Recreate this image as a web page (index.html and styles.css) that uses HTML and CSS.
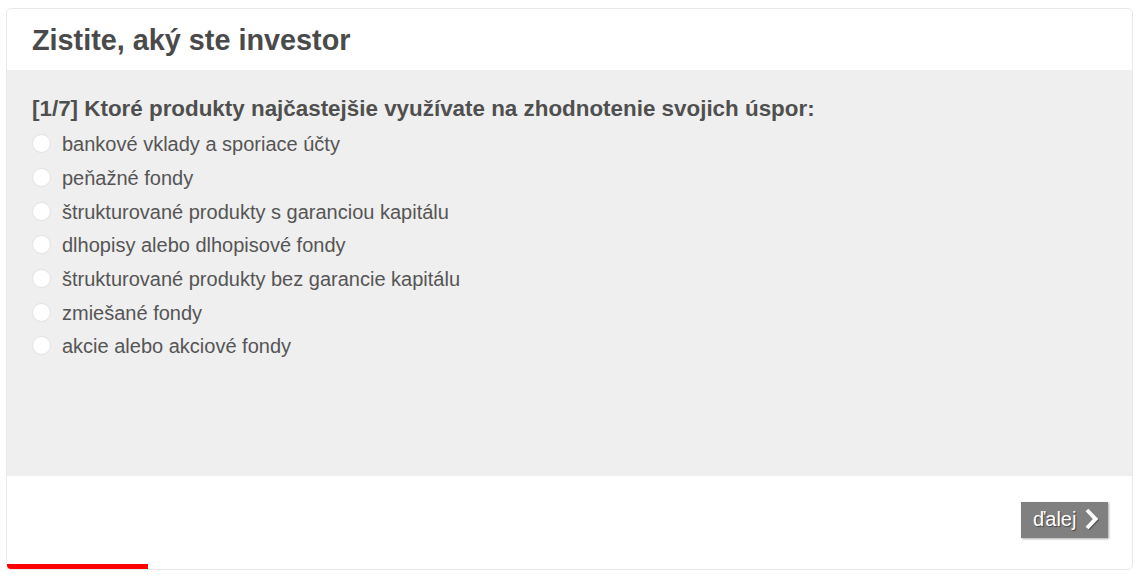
FILE: index.html
```html
<!DOCTYPE html>
<html lang="sk">
<head>
<meta charset="utf-8">
<title>Zistite, aký ste investor</title>
<link rel="stylesheet" href="styles.css">
</head>
<body>
<div class="card">
  <div class="head"><h1 class="title">Zistite, aký ste investor</h1></div>
  <div class="body">
    <p class="question">[1/7] Ktoré produkty najčastejšie využívate na zhodnotenie svojich úspor:</p>
    <ul class="options">
      <li class="option"><span class="radio"></span>bankové vklady a sporiace účty</li>
      <li class="option"><span class="radio"></span>peňažné fondy</li>
      <li class="option"><span class="radio"></span>štrukturované produkty s garanciou kapitálu</li>
      <li class="option"><span class="radio"></span>dlhopisy alebo dlhopisové fondy</li>
      <li class="option"><span class="radio"></span>štrukturované produkty bez garancie kapitálu</li>
      <li class="option"><span class="radio"></span>zmiešané fondy</li>
      <li class="option"><span class="radio"></span>akcie alebo akciové fondy</li>
    </ul>
  </div>
  <div class="foot">
    <div class="actions">
      <button class="next">ďalej<svg class="chev" width="15" height="24" viewBox="0 0 15 24"><path d="M3 3 L11.5 12 L3 21" fill="none" stroke="#fff" stroke-width="4" stroke-linejoin="miter"/></svg></button>
    </div>
    <div class="progress"><div class="bar" style="width:141px"></div></div>
  </div>
</div>
</body>
</html>
```
FILE: styles.css
```css
html, body {
  margin: 0;
  padding: 0;
  background: #fff;
}
body {
  font-family: "Liberation Sans", Arial, sans-serif;
  color: #555;
}
.card {
  margin: 8px 7px 0 6px;
  height: 562px;
  box-sizing: border-box;
  border: 1px solid #e9e9e9;
  border-radius: 5px;
  display: flex;
  flex-direction: column;
  overflow: hidden;
}
.head {
  height: 61px;
  display: flex;
  align-items: flex-start;
  padding-left: 25px;
}
.title {
  margin: 14px 0 0;
  font-size: 28.8px;
  line-height: 34px;
  font-weight: bold;
  color: #4a4a4a;
}
.body {
  height: 406px;
  background: #efefef;
  padding: 26px 0 0 25px;
  box-sizing: border-box;
}
.question {
  margin: 0;
  font-size: 22.4px;
  line-height: 26px;
  font-weight: bold;
  color: #4f4f4f;
}
.options {
  list-style: none;
  margin: 6px 0 0;
  padding: 0;
}
.option {
  height: 33.67px;
  display: flex;
  align-items: center;
  font-size: 20px;
  color: #555;
}
.radio {
  width: 17px;
  height: 17px;
  border: 1px solid #e2e2e2;
  border-radius: 50%;
  background: #fff;
  margin-right: 11px;
  flex: none;
  position: relative;
  top: -1px;
}
.foot {
  flex: 1;
  display: flex;
  flex-direction: column;
}
.actions {
  display: flex;
  justify-content: flex-end;
  padding: 26px 24px 0 0;
  flex: 1;
}
.next {
  width: 87px;
  height: 36px;
  border: 0;
  background: #808080;
  color: #fff;
  font-family: "Liberation Sans", Arial, sans-serif;
  font-size: 20px;
  display: flex;
  align-items: center;
  justify-content: flex-start;
  padding: 0 0 2px 12px;
  box-sizing: border-box;
  gap: 8px;
  text-shadow: 1px 1px 1px #444;
  box-shadow: 1px 1px 2px #aaa;
}
.chev {
  flex: none;
  filter: drop-shadow(1px 1px 0.5px #555);
}
.progress {
  height: 5px;
}
.bar {
  height: 5px;
  background: #f00;
}
```
